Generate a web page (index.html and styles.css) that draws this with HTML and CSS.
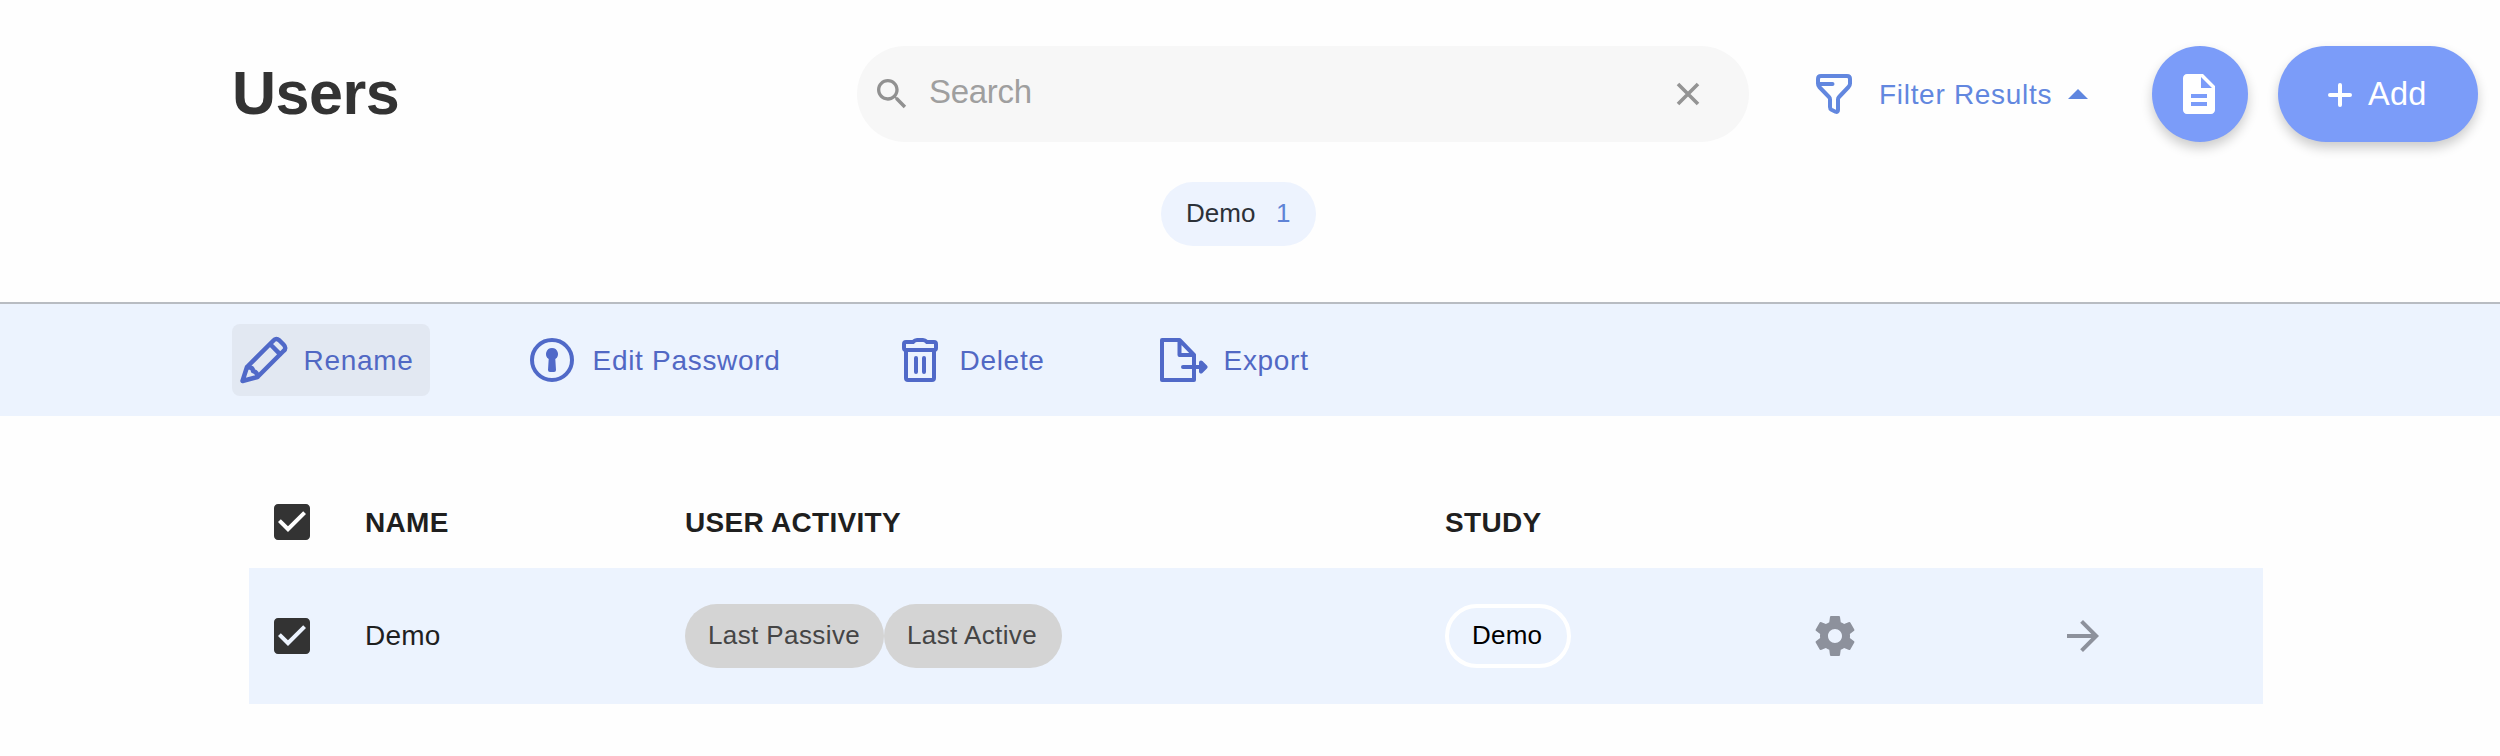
FILE: index.html
```html
<!DOCTYPE html>
<html lang="en">
<head>
<meta charset="utf-8">
<title>Users</title>
<link rel="stylesheet" href="styles.css">
</head>
<body>
<header class="header">
  <div class="topbar">
    <h1 class="title">Users</h1>
    <div class="search">
      <svg class="search-icon" viewBox="0 0 24 24"><path d="M15.5 14h-.79l-.28-.27C15.41 12.59 16 11.11 16 9.5 16 5.91 13.09 3 9.5 3S3 5.91 3 9.5 5.91 16 9.5 16c1.61 0 3.09-.59 4.23-1.57l.27.28v.79l5 4.99L20.49 19l-4.99-5zm-6 0C7.01 14 5 11.99 5 9.5S7.01 5 9.5 5 14 7.01 14 9.5 11.99 14 9.5 14z"/></svg>
      <span class="search-text">Search</span>
      <svg class="clear-icon" viewBox="0 0 24 24"><path d="M2 2l20 20M22 2L2 22"/></svg>
    </div>
    <div class="filter">
      <svg class="filter-icon" viewBox="0 0 36 40"><path d="M5 2H31Q34 2 34 5V9.500Q34 11.500 32.500 13L23 23Q22 24 22 25.500V36Q22 38.500 19.500 37.700L15.500 35.800Q14 35 14 33V25.500Q14 24 13 23L3.300 13Q2 11.500 2 9.500V5Q2 2 5 2ZM3 10H16.500"/></svg>
      <span class="filter-text">Filter Results</span>
      <svg class="caret" viewBox="0 0 20 10"><path d="M0 10L10 0l10 10z"/></svg>
    </div>
    <div class="doc-button">
      <svg class="icon48" viewBox="0 0 24 24"><path d="M14 2H6c-1.100 0-1.990.9-1.990 2L4 20c0 1.100.89 2 1.990 2H18c1.100 0 2-.9 2-2V8l-6-6zm2 16H8v-2h8v2zm0-4H8v-2h8v2zm-3-5V3.500L18.500 9H13z"/></svg>
    </div>
    <div class="add-button">
      <svg class="plus" viewBox="0 0 24 24"><path d="M12 2v20M2 12h20"/></svg>
      <span class="add-text">Add</span>
    </div>
  </div>
  <div class="tags">
    <div class="tag"><span class="tag-name">Demo</span><span class="tag-count">1</span></div>
  </div>
</header>

<nav class="actions">
  <div class="action rename">
    <svg class="pencil" viewBox="0 0 48 48"><path d="M7 31L33 5Q36 1.500 39.500 4.500L43.500 8.500Q47 12 43.500 15L17.500 41L2.500 45Z M7 31Q13 31 13 35Q17.500 36 17.500 41 M30 8L40.200 18.300"/></svg>
    <span class="action-text">Rename</span>
  </div>
  <div class="action password">
    <svg class="keyhole" viewBox="0 0 44 44"><circle class="line" cx="22" cy="22" r="20"/><path d="M22 10a6 6 0 0 1 3.300 11L26 32q0 2-2 2h-4q-2 0-2-2l.7-11A6 6 0 0 1 22 10z"/></svg>
    <span class="action-text">Edit Password</span>
  </div>
  <div class="action delete">
    <svg class="trash" viewBox="0 0 36 44"><path d="M4 12V40Q4 42 6 42H30Q32 42 32 40V12M4 12H32Q34 12 34 10V6Q34 4 32 4H25Q23 2 21 2H15Q13 2 11 4H4Q2 4 2 6V10Q2 12 4 12ZM14 20V34M22 20V34"/></svg>
    <span class="action-text">Delete</span>
  </div>
  <div class="action export">
    <svg class="export-icon" viewBox="0 0 48 44"><path d="M34 17L19.500 2H2V42H34V17H19.500V2M23 29H45M41 24.500L45.500 29L41 33.500Z"/></svg>
    <span class="action-text">Export</span>
  </div>
</nav>

<main class="table">
  <div class="row head">
    <svg class="icon48 check" viewBox="0 0 24 24"><path d="M19 3H5c-1.110 0-2 .9-2 2v14c0 1.100.89 2 2 2h14c1.110 0 2-.9 2-2V5c0-1.100-.89-2-2-2zm-9 14l-5-5 1.410-1.410L10 14.170l7.590-7.590L19 8l-9 9z"/></svg>
    <span class="cell">NAME</span>
    <span class="cell">USER ACTIVITY</span>
    <span class="cell">STUDY</span>
  </div>
  <div class="row body">
    <svg class="icon48 check" viewBox="0 0 24 24"><path d="M19 3H5c-1.110 0-2 .9-2 2v14c0 1.100.89 2 2 2h14c1.110 0 2-.9 2-2V5c0-1.100-.89-2-2-2zm-9 14l-5-5 1.410-1.410L10 14.170l7.590-7.590L19 8l-9 9z"/></svg>
    <span class="cell">Demo</span>
    <div class="chips"><span class="chip passive">Last Passive</span><span class="chip active">Last Active</span></div>
    <div class="chips"><span class="chip study">Demo</span></div>
    <svg class="icon48 muted" viewBox="0 0 24 24"><path d="M19.430 12.980c.04-.32.07-.64.07-.98s-.03-.66-.07-.98l2.110-1.650c.19-.15.24-.42.12-.64l-2-3.460c-.12-.22-.39-.3-.61-.22l-2.490 1c-.52-.4-1.080-.73-1.690-.98l-.38-2.650C14.460 2.180 14.250 2 14 2h-4c-.25 0-.46.18-.49.42l-.38 2.650c-.61.25-1.170.59-1.690.98l-2.490-1c-.23-.09-.49 0-.61.22l-2 3.460c-.13.22-.07.49.12.64l2.110 1.650c-.04.32-.07.65-.07.98s.03.66.07.98l-2.110 1.650c-.19.15-.24.42-.12.64l2 3.460c.12.22.39.3.61.22l2.490-1c.52.4 1.080.73 1.690.98l.38 2.650c.03.24.24.42.49.42h4c.25 0 .46-.18.49-.42l.38-2.650c.61-.25 1.170-.59 1.690-.98l2.490 1c.23.09.49 0 .61-.22l2-3.460c.12-.22.07-.49-.12-.64l-2.110-1.650zM12 15.500c-1.930 0-3.500-1.570-3.500-3.500s1.570-3.500 3.500-3.500 3.500 1.570 3.500 3.500-1.570 3.500-3.500 3.500z"/></svg>
    <svg class="icon48 muted" viewBox="0 0 24 24"><path d="M12 4l-1.410 1.410L16.170 11H4v2h12.170l-5.580 5.590L12 20l8-8z"/></svg>
  </div>
</main>
</body>
</html>
```

FILE: styles.css
```css
* { box-sizing: border-box; }
body {
  margin: 0;
  background: #fefefe;
  font-family: "Liberation Sans", Arial, sans-serif;
  font-size: 28px;
  color: #1f1f1f;
}
svg { display: block; flex: none; }
span { white-space: nowrap; }

.header { height: 302px; padding-top: 46px; }
.topbar { display: flex; align-items: center; height: 96px; padding-left: 232px; }
.title { margin: 0; width: 625px; padding-bottom: 2px; font-size: 61px; line-height: 70px; font-weight: 700; color: #333; letter-spacing: -0.5px; }

.search { display: flex; align-items: center; width: 892px; height: 96px; padding: 0 49px 0 15px; border-radius: 48px; background: #f7f7f7; }
.search-icon { width: 40px; height: 40px; fill: #919191; }
.search-text { margin-left: 17px; flex: 1; font-size: 33px; line-height: 36px; color: #9f9f9f; padding-bottom: 4px; letter-spacing: -0.3px; }
.clear-icon { width: 24px; height: 24px; fill: none; stroke: #949494; stroke-width: 3.600; }

.filter { display: flex; align-items: center; width: 336px; margin-left: 67px; }
.filter-icon { width: 36px; height: 40px; fill: none; stroke: #6287df; stroke-width: 4; stroke-linecap: round; stroke-linejoin: round; }
.filter-text { margin-left: 27px; width: 176px; padding-top: 1px; color: #6287df; letter-spacing: 0.7px; }
.caret { margin-left: 13px; width: 20px; height: 10px; fill: #5f86df; }

.doc-button, .add-button { display: flex; align-items: center; height: 96px; border-radius: 48px; background: #7b9cf9; box-shadow: 0 6px 12px rgba(0, 0, 0, 0.2); }
.doc-button { width: 96px; justify-content: center; padding-right: 2px; }
.add-button { width: 200px; margin-left: 30px; padding-left: 50px; }
.icon48 { width: 48px; height: 48px; fill: #fff; }
.plus { width: 24px; height: 24px; margin-top: 2px; fill: none; stroke: #fff; stroke-width: 4; stroke-linecap: round; }
.add-text { margin-left: 16px; padding-bottom: 1px; font-size: 32.500px; line-height: 36px; color: #fff; letter-spacing: 0.3px; }

.tags { display: flex; padding: 40px 0 0 1161px; }
.tag { display: flex; align-items: center; width: 155px; height: 64px; padding: 0 0 2px 25px; border-radius: 32px; background: #edf3fe; font-size: 26px; }
.tag-name { width: 90px; color: #2c3138; }
.tag-count { color: #5f83d6; }

.actions { display: flex; align-items: center; height: 114px; padding-left: 232px; border-top: 2px solid #b8bcc2; background: #ecf3fe; color: #5168c4; }
.action { display: flex; align-items: center; height: 72px; padding-left: 8px; border-radius: 8px; }
.action-text { padding: 1px 0 0 1.500px; letter-spacing: 0.7px; }
.action svg { fill: none; stroke: #5069c8; stroke-width: 4; stroke-linejoin: round; stroke-linecap: round; }
.rename { width: 198px; background: #e2e8f2; }
.action .pencil { width: 48px; height: 48px; margin-right: 14px; stroke-width: 4.500; }
.password { margin-left: 92px; width: 364px; }
.keyhole { width: 44px; height: 44px; margin-right: 17px; }
.action .keyhole path { fill: #5069c8; stroke: none; }
.delete { width: 258px; }
.trash { width: 36px; height: 44px; margin: 0 20px 0 8px; }
.export-icon { width: 48px; height: 44px; margin: 0 14px 0 8px; }

.table { padding: 60px 0 0 249px; }
.row { display: grid; align-items: center; width: 2014px; padding-left: 19px; }
.head { grid-template-columns: 97px 320px 760px 366px; height: 92px; font-weight: 700; letter-spacing: 0.3px; }
.head .cell { padding-top: 1px; }
.body { grid-template-columns: 97px 320px 760px 366px 248px 48px; height: 136px; background: #ecf3fe; letter-spacing: 0.2px; }
.check { fill: #333; }
.muted { fill: #8d919c; }
.chips { display: flex; }
.chip { display: flex; align-items: center; height: 64px; padding-bottom: 2px; border-radius: 32px; background: #d4d4d4; color: #454545; font-size: 26px; }
.passive { width: 199px; padding-left: 23px; letter-spacing: 0.4px; }
.active { width: 178px; padding-left: 23px; letter-spacing: 0.4px; }
.study { width: 126px; padding-left: 23px; border: 4px solid #fff; background: none; color: #000; }
```
